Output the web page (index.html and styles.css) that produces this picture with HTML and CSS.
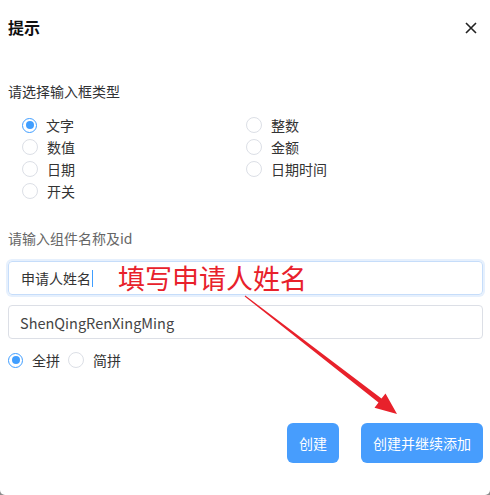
FILE: index.html
```html
<!DOCTYPE html>
<html lang="zh-CN">
<head>
<meta charset="utf-8">
<link rel="stylesheet" href="styles.css">
</head>
<body>
<div class="dialog">
  <div class="header">
    <span class="title">提示</span>
    <svg class="close" width="12" height="12" viewBox="0 0 12 12"><path d="M1 1L11 11M11 1L1 11" stroke="#222" stroke-width="1.6" fill="none"/></svg>
  </div>
  <div class="label">请选择输入框类型</div>
  <div class="radio-grid">
    <label class="radio"><span class="dot checked"></span>文字</label>
    <label class="radio"><span class="dot"></span>整数</label>
    <label class="radio"><span class="dot"></span>数值</label>
    <label class="radio"><span class="dot"></span>金额</label>
    <label class="radio"><span class="dot"></span>日期</label>
    <label class="radio"><span class="dot"></span>日期时间</label>
    <label class="radio"><span class="dot"></span>开关</label>
  </div>
  <div class="label label-grey">请输入组件名称及id</div>
  <div class="input focused"><span>申请人姓名</span><span class="caret"></span><span class="note">填写申请人姓名</span></div>
  <div class="input input2"><span>ShenQingRenXingMing</span></div>
  <div class="radio-row">
    <label class="radio"><span class="dot checked"></span>全拼</label>
    <label class="radio"><span class="dot"></span>简拼</label>
  </div>
  <div class="footer">
    <button class="btn">创建</button>
    <button class="btn">创建并继续添加</button>
  </div>
  <svg class="arrow" width="490" height="495" viewBox="0 0 490 495"><polygon points="245.3,295.6 381.5,398.6 385.5,393.5 397,414 374.5,407.7 378.5,402.6 244.7,296.4" fill="#e8212b"/></svg>
</div>
</body>
</html>
```

FILE: styles.css
```css
html { background: #8c8c8c; }
body {
  margin: 0;
  font-family: "Noto Sans CJK SC", "Noto Sans", sans-serif;
  color: #333;
}
.dialog {
  position: relative;
  background: #fff;
  height: 495px;
  box-sizing: border-box;
  padding: 17px 6px 0 8px;
  border-radius: 0 0 5px 5px;
}
.header {
  display: flex;
  justify-content: space-between;
  align-items: center;
  height: 20px;
}
.title {
  font-size: 16px;
  font-weight: bold;
  color: #111;
  line-height: 20px;
}
.close { margin-right: 7px; margin-top: 2px; }
.label {
  font-size: 14px;
  line-height: 20px;
  margin-top: 44px;
  color: #303133;
}
.label-grey { color: #666; margin-top: 26px; }
.radio-grid {
  display: grid;
  grid-template-columns: 224px 224px;
  grid-auto-rows: 22px;
  padding-left: 14px;
  margin-top: 13px;
}
.radio {
  display: flex;
  align-items: center;
  font-size: 14px;
  color: #333;
  line-height: 22px;
}
.dot {
  width: 14px;
  height: 14px;
  border: 1px solid #dcdfe6;
  border-radius: 50%;
  margin-right: 9px;
  box-sizing: content-box;
  position: relative;
}
.dot.checked { border: 1.5px solid #409eff; width: 13px; height: 13px; }
.dot.checked::after {
  content: "";
  position: absolute;
  left: 2.5px; top: 2.5px;
  width: 8px; height: 8px;
  border-radius: 50%;
  background: #409eff;
}
.input {
  position: relative;
  display: flex;
  align-items: center;
  height: 34px;
  box-sizing: border-box;
  border: 1px solid #dcdfe6;
  border-radius: 4px;
  padding-left: 12px;
  margin-right: 1px;
  margin-top: 13px;
  font-size: 14px;
  color: #333;
}
.focused {
  border-color: #c6ddfa;
  box-shadow: 0 0 0 2px #e6f0fd;
}
.input2 { margin-top: 10px; font-size: 14.5px; color: #444; padding-left: 11px; }
.caret {
  width: 1px;
  height: 17px;
  background: #409eff;
  margin-left: 1px;
}
.note {
  position: absolute;
  left: 109px;
  top: -1px;
  font-size: 27px;
  line-height: 34px;
  color: #e8212b;
}
.radio-row {
  display: flex;
  margin-top: 10px;
  height: 22px;
}
.radio-row .radio { margin-right: 8px; }
.radio-row .dot { margin-right: 9px; }
.footer {
  display: flex;
  justify-content: flex-end;
  gap: 22px;
  margin-top: 52px;
  padding-right: 1px;
}
.btn {
  height: 40px;
  padding: 0 12px;
  border: none;
  border-radius: 6px;
  background: #479dfd;
  color: #fff;
  font-family: inherit;
  font-size: 14px;
}
.arrow {
  position: absolute;
  left: 0; top: 0;
  pointer-events: none;
}
```
